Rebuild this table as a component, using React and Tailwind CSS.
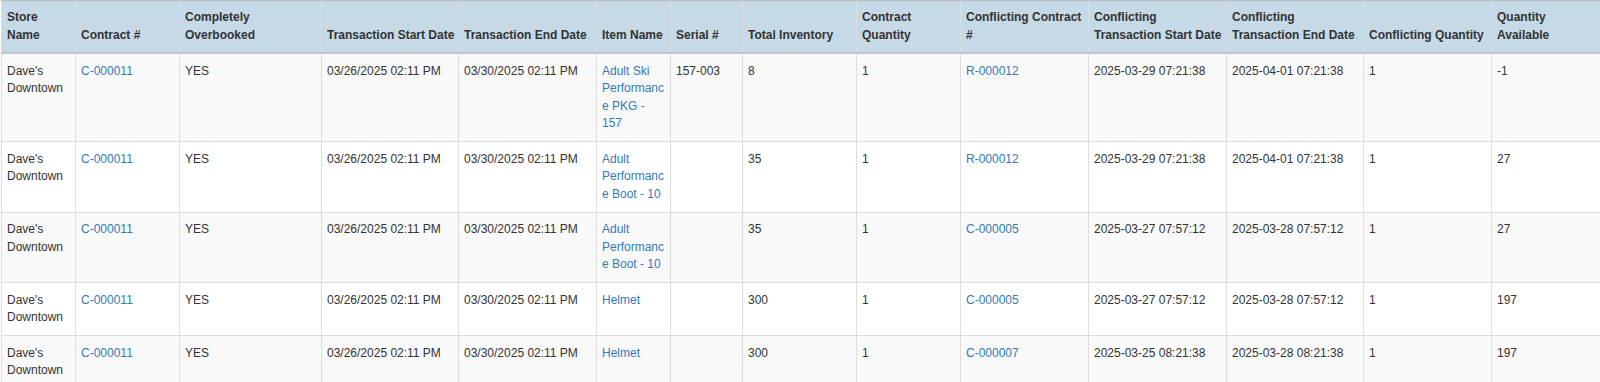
const columns = [
  { label: ["Store", "Name"], w: "w-[74px]" },
  { label: ["Contract #"], w: "w-[104px]" },
  { label: ["Completely", "Overbooked"], w: "w-[142px]" },
  { label: ["Transaction Start Date"], w: "w-[137px]" },
  { label: ["Transaction End Date"], w: "w-[138px]" },
  { label: ["Item Name"], w: "w-[74px]" },
  { label: ["Serial #"], w: "w-[72px]" },
  { label: ["Total Inventory"], w: "w-[114px]" },
  { label: ["Contract", "Quantity"], w: "w-[104px]" },
  { label: ["Conflicting Contract", "#"], w: "w-[128px]" },
  { label: ["Conflicting", "Transaction Start Date"], w: "w-[138px]" },
  { label: ["Conflicting", "Transaction End Date"], w: "w-[137px]" },
  { label: ["Conflicting Quantity"], w: "w-[128px]" },
  { label: ["Quantity", "Available"], w: "w-[140px]" },
];

const rows = [
  {
    item: "Adult Ski Performance PKG - 157",
    serial: "157-003",
    total: "8",
    conflict: "R-000012",
    cStart: "2025-03-29 07:21:38",
    cEnd: "2025-04-01 07:21:38",
    avail: "-1",
  },
  {
    item: "Adult Performance Boot - 10",
    serial: "",
    total: "35",
    conflict: "R-000012",
    cStart: "2025-03-29 07:21:38",
    cEnd: "2025-04-01 07:21:38",
    avail: "27",
  },
  {
    item: "Adult Performance Boot - 10",
    serial: "",
    total: "35",
    conflict: "C-000005",
    cStart: "2025-03-27 07:57:12",
    cEnd: "2025-03-28 07:57:12",
    avail: "27",
  },
  {
    item: "Helmet",
    serial: "",
    total: "300",
    conflict: "C-000005",
    cStart: "2025-03-27 07:57:12",
    cEnd: "2025-03-28 07:57:12",
    avail: "197",
  },
  {
    item: "Helmet",
    serial: "",
    total: "300",
    conflict: "C-000007",
    cStart: "2025-03-25 08:21:38",
    cEnd: "2025-03-28 08:21:38",
    avail: "197",
  },
];

const td = "border border-[#ddd] px-[5px] py-[8.5px] align-top break-words";
const link = "text-[#337ab7]";

export default function App() {
  return (
    <div className="bg-white w-[1600px] h-[382px] overflow-hidden pl-[1px] font-['Liberation_Sans',Arial,sans-serif] text-[12px] leading-[17.5px] text-[#333]">
      <table className="table-fixed border-collapse w-[1631px]">
        <thead>
          <tr className="bg-[#c6d9e7]">
            {columns.map((c) => (
              <th
                key={c.label.join(" ")}
                className={`${c.w} border border-[#c8c8c8] border-t-[#bbb] border-b-2 border-b-[#c4c4c4] border-x-[#d4dde4] px-[5px] py-[8px] align-bottom text-left font-bold whitespace-nowrap`}
              >
                {c.label.map((line, j) => (
                  <div key={j}>{line}</div>
                ))}
              </th>
            ))}
          </tr>
        </thead>
        <tbody>
          {rows.map((r, i) => (
            <tr key={i} className={i % 2 === 0 ? "bg-[#f9f9f9]" : "bg-white"}>
              <td className={td}>Dave's Downtown</td>
              <td className={td}>
                <span className={link}>C-000011</span>
              </td>
              <td className={td}>YES</td>
              <td className={td}>03/26/2025 02:11 PM</td>
              <td className={td}>03/30/2025 02:11 PM</td>
              <td className={td}>
                <span className={link}>{r.item}</span>
              </td>
              <td className={td}>{r.serial}</td>
              <td className={td}>{r.total}</td>
              <td className={td}>1</td>
              <td className={td}>
                <span className={link}>{r.conflict}</span>
              </td>
              <td className={td}>{r.cStart}</td>
              <td className={td}>{r.cEnd}</td>
              <td className={td}>1</td>
              <td className={td}>{r.avail}</td>
            </tr>
          ))}
        </tbody>
      </table>
    </div>
  );
}
